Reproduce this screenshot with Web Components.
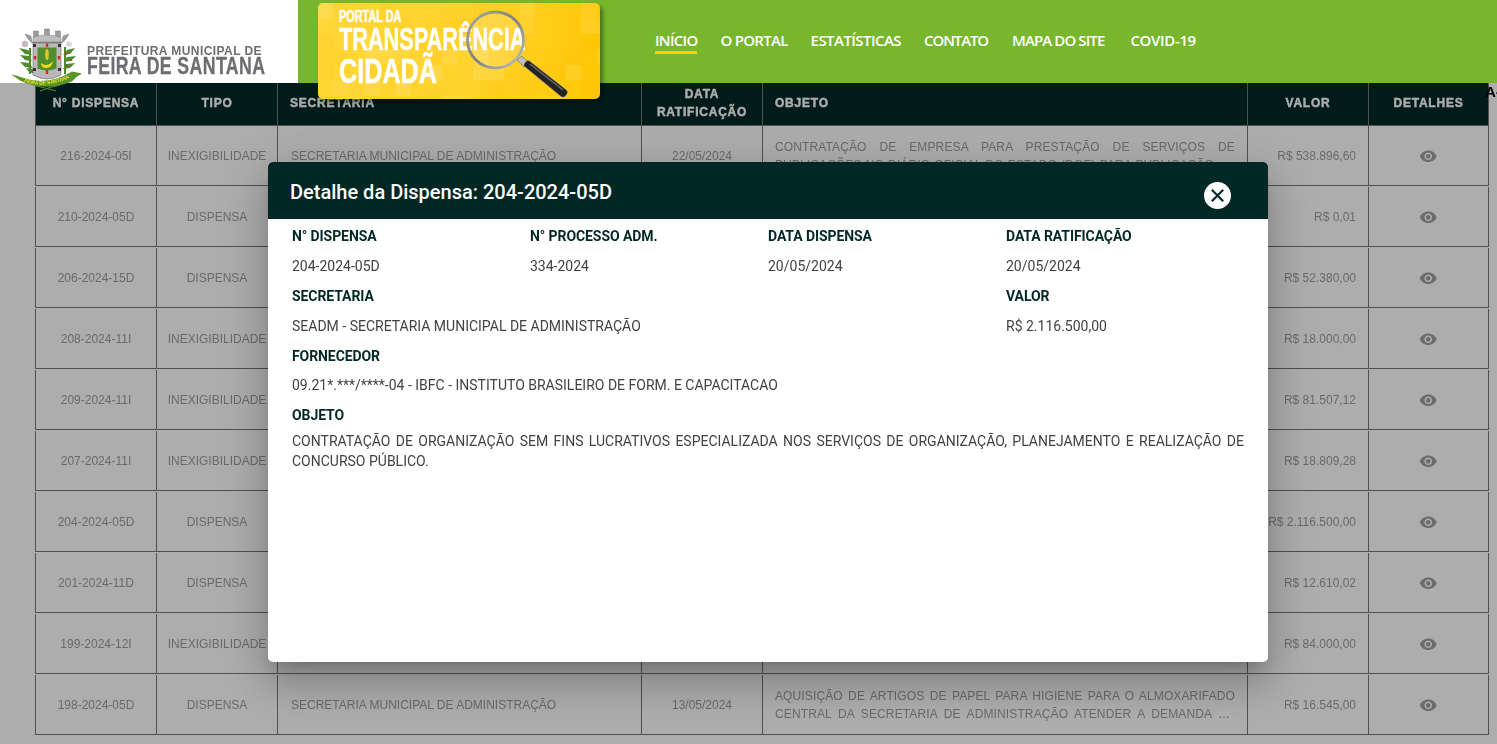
<!DOCTYPE html>
<html lang="pt-BR">
<head>
<meta charset="utf-8">
<title>Portal da Transparência Cidadã</title>
<style>
html,body{margin:0;padding:0;height:744px;overflow:hidden;background:#fff;font-family:"Liberation Sans",Arial,sans-serif}
</style>
</head>
<body>
<site-header></site-header>
<dispensa-table></dispensa-table>
<modal-overlay></modal-overlay>
<dispensa-modal titulo="Detalhe da Dispensa: 204-2024-05D"></dispensa-modal>
<script>
function def(name, css, html){
  customElements.define(name, class extends HTMLElement{
    constructor(){
      super();
      const r=this.attachShadow({mode:'open'});
      r.innerHTML='<style>'+css+'</style>'+(typeof html==='function'?html(this):html);
    }
  });
}

def('brand-logo',`
:host{display:flex;width:298px;height:83px;background:#fff;flex:none;position:relative}
svg{position:absolute;left:0;top:20px;width:90px;height:75px;overflow:visible}
.t{position:absolute;left:87px;color:#6d6e71;font-weight:700;white-space:nowrap}
.a{top:45px;font-size:12px;line-height:13px;letter-spacing:.43px}
.b{top:56px;font-size:23.5px;line-height:20px;letter-spacing:.5px;transform:scaleX(.754);transform-origin:0 0;-webkit-text-stroke:.3px #6d6e71}
`,`
<svg viewBox="0 20 90 75" aria-hidden="true">
  <g fill="#9c9c9c" stroke="#6f6f6f" stroke-width=".4">
    <path d="M25 34l6 2 1 6h30l1-6 6-2-3 5-4 4H32l-4-4z"/>
    <rect x="33.5" y="31" width="5" height="6"/><rect x="44.5" y="29" width="5" height="8"/><rect x="55.5" y="31" width="5" height="6"/>
    <path d="M33 37q14-4 28 0v5H33z" fill="#bdbdbd"/>
  </g>
  <circle cx="25" cy="44" r="3.2" fill="#c9b6c4"/>
  <g fill="#4e8a2c">
    <path d="M19 48l9 2 4 5-7-1z"/><path d="M20 55l9 1 3 5-7-1z"/><path d="M20 62l9 1 4 5-8-1z"/><path d="M26 68l7 1 2 5-6-2z"/>
    <path d="M29 48h2v26h-2z"/>
    <path d="M75 48l-8 2-4 5 7-1z"/><path d="M76 56l-9 1-3 5 7-1z"/><path d="M75 63l-9 1-3 5 7-1z"/>
    <path d="M64 47h2v27h-2z"/>
  </g>
  <circle cx="69" cy="44" r="2.8" fill="#d9d9d9"/>
  <g fill="#c8322b"><circle cx="66" cy="54" r="1.1"/><circle cx="71" cy="60" r="1.1"/><circle cx="67" cy="66" r="1.1"/></g>
  <path d="M33 43h28v32q-14 8-28 0z" fill="#b9b9b9" stroke="#666" stroke-width=".6"/>
  <path d="M37.5 47.5h19v21q-9.500 4-19 0z" fill="#4f8e2a"/>
  <ellipse cx="47" cy="54.500" rx="1.800" ry="5.500" fill="#e3c61b"/>
  <path d="M41 63q6 5 12-2q-1 7-6.500 7t-5.500-5z" fill="#f4dc17"/>
  <g fill="#d8262a"><rect x="45.800" y="43.500" width="2.400" height="3.500"/><rect x="33.800" y="56" width="2.400" height="3.500"/><rect x="57.800" y="56" width="2.400" height="3.500"/><rect x="45.800" y="70" width="2.400" height="4"/></g>
  <g fill="#333"><rect x="33" y="44" width="3" height="3"/><rect x="58" y="44" width="3" height="3"/><rect x="33" y="68" width="3" height="3"/><rect x="58" y="68" width="3" height="3"/></g>
  <path d="M11 74.500q6 1 11 3q25 9 50-6l10 2q-6 3-10 8q-28 11-52-1q-4-3-9-6z" fill="#5a9626"/>
  <path id="rt" d="M22 81.500q25 8 50-5" fill="none"/>
  <text font-family="Liberation Sans" font-weight="700" font-size="4.800" fill="#f1e23a"><textPath href="#rt" startOffset="2">FEIRA DE SANTANA</textPath></text>
  <g fill="none" stroke="#4f8a2c" stroke-width="1.100"><path d="M36 86q10 2 20 5"/><path d="M60 85q-10 2-20 6"/></g>
</svg>
<span class="t a">PREFEITURA MUNICIPAL DE</span>
<span class="t b">FEIRA DE SANTANA</span>
`);

def('portal-banner',`
:host{display:block;position:relative;flex:none;width:282px;height:96px;margin:3px 0 0 20px;border-radius:5px;
  background:linear-gradient(100deg,#ffd737,#ffd22c 55%,#ffc704);box-shadow:3px 3px 4px rgba(0,0,0,.38);color:#fff;z-index:2}
svg{position:absolute;inset:0;width:282px;height:96px;overflow:visible}
#mos{overflow:hidden;border-radius:5px}
.l{position:absolute;left:21px;font-family:"Liberation Sans",sans-serif;font-weight:700;white-space:nowrap;transform-origin:0 0;-webkit-text-stroke:.5px #fff}
.p{top:5px;font-size:16px;line-height:18px;transform:scaleX(.68)}
.q{top:19px;font-size:31px;line-height:36px;transform:scaleX(.70)}
.r{top:48px;font-size:35px;line-height:40px;transform:scaleX(.72)}
`,`
<svg id="mos" viewBox="318 3 282 96" aria-hidden="true"></svg>
<span class="l p">PORTAL DA</span>
<span class="l q">TRANSPARÊNCIA</span>
<span class="l r">CIDADÃ</span>
<svg viewBox="318 3 282 96" aria-hidden="true">
  <defs>
    <linearGradient id="rg" x1="0" y1="0" x2="1" y2="1"><stop offset="0" stop-color="#a9a9a9"/><stop offset=".5" stop-color="#7f7f7f"/><stop offset="1" stop-color="#c4c4c4"/></linearGradient>
  </defs>
  <circle cx="495.500" cy="40" r="28" fill="rgba(255,255,255,.14)" stroke="url(#rg)" stroke-width="2.800"/>
  <path d="M517 60l5-4 7 7-5 4z" fill="#bfbfbf" stroke="#555" stroke-width=".5"/>
  <path d="M526 61.500q1.500-1.500 3.500-.5l37 29q2 2 .5 4l-2 2.500q-2 1.500-4 0l-36.500-30q-1.500-1.500 0-3z" fill="#232323" stroke="#9a9a9a" stroke-width=".5"/>
  <path d="M530 64l33 26" stroke="#6a6a6a" stroke-width="1.400" fill="none"/>
</svg>
`);

def('nav-link',`
:host{display:block;font:600 15px/18px "Open Sans","Liberation Sans",sans-serif;letter-spacing:-.72px;color:#fff;white-space:nowrap;padding-bottom:2px;border-bottom:3px solid transparent}
:host([active]){border-bottom-color:#ffcd00}
`,`<slot></slot>`);

def('site-nav',`
:host{display:flex;gap:23px;align-items:center;margin-left:55px;padding-top:2px}
`,`<slot></slot>`);

def('site-header',`
:host{display:flex;position:relative;z-index:20;height:83px;background:#78b72d;align-items:stretch}
`,`
<brand-logo></brand-logo>
<portal-banner></portal-banner>
<site-nav>
  <nav-link active>INÍCIO</nav-link><nav-link>O PORTAL</nav-link><nav-link style="letter-spacing:-.55px">ESTATÍSTICAS</nav-link><nav-link style="letter-spacing:-1.1px">CONTATO</nav-link><nav-link style="letter-spacing:-.9px;margin-left:1px">MAPA DO SITE</nav-link><nav-link style="letter-spacing:-.35px;margin-left:3px">COVID-19</nav-link>
</site-nav>`);

const COLS='121px 121px 364px 121px 485px 121px 121px';
def('head-row',`
:host{display:grid;grid-template-columns:${COLS};height:43px;background:#002826;color:#fff;font-size:12px;font-weight:700;letter-spacing:.77px;line-height:18px;text-align:center}
div{display:flex;align-items:center;justify-content:center;box-sizing:border-box;border-left:1px solid #767676;border-bottom:1px solid #767676;padding-bottom:2px;-webkit-text-stroke:.4px #fff}
div.l{justify-content:flex-start;padding-left:12px}
div:last-child{border-right:1px solid #767676}
`,`<div>N° DISPENSA</div><div>TIPO</div><div class="l">SECRETARIA</div><div>DATA<br>RATIFICAÇÃO</div><div class="l">OBJETO</div><div>VALOR</div><div>DETALHES</div>`);

def('eye-icon',`:host{display:block;width:18.5px;height:18.5px;margin-top:1px}svg{display:block;width:100%;height:100%;fill:#a0a0a0}`,
`<svg viewBox="0 0 24 24"><path d="M12 4.500C7 4.500 2.730 7.610 1 12c1.730 4.390 6 7.500 11 7.500s9.270-3.110 11-7.500c-1.730-4.390-6-7.500-11-7.500zM12 17c-2.760 0-5-2.240-5-5s2.240-5 5-5 5 2.240 5 5-2.240 5-5 5zm0-8c-1.660 0-3 1.340-3 3s1.340 3 3 3 3-1.340 3-3-1.340-3-3-3z"/></svg>`);

def('data-row',`
:host{display:grid;grid-template-columns:${COLS};height:60px;margin-bottom:1px;color:#9c9c9c;font-size:12px;line-height:18px}
div{display:flex;align-items:center;justify-content:center;box-sizing:border-box;border-left:1px solid #767676;border-bottom:1px solid #767676;white-space:nowrap;min-width:0}
div.l{justify-content:flex-start;padding-left:13px}
div.r{justify-content:flex-end;padding-right:12px}
div:last-child{border-right:1px solid #767676}
div.o{padding:0 12px;white-space:normal}
p{margin:0;width:100%;text-align:justify;display:-webkit-box;-webkit-box-orient:vertical;-webkit-line-clamp:2;overflow:hidden;letter-spacing:.12px}
`,h=>{
  const g=n=>h.getAttribute(n)||'';
  return `<div>${g('num')}</div><div>${g('tipo')}</div><div class="l">${g('sec')}</div><div>${g('data')}</div><div class="o">${g('obj')?'<p>'+g('obj')+'</p>':''}</div><div class="r">${g('val')}</div><div><eye-icon></eye-icon></div>`;
});

def('dispensa-table',`
:host{display:block;position:relative;margin-left:35px;width:1454px;will-change:opacity}
.a{position:absolute;left:1450px;top:1px;font:700 15px/16px "Liberation Sans",sans-serif;color:#000;white-space:nowrap}
`,`
<head-row></head-row>
<data-row num="216-2024-05I" tipo="INEXIGIBILIDADE" sec="SECRETARIA MUNICIPAL DE ADMINISTRAÇÃO" data="22/05/2024" obj="CONTRATAÇÃO DE EMPRESA PARA PRESTAÇÃO DE SERVIÇOS DE PUBLICAÇÕES NO DIÁRIO OFICIAL DO ESTADO (DOE) PARA PUBLICAÇÃO DE ATOS OFICIAIS DA ADMINISTRAÇÃO" val="R$ 538.896,60"></data-row>
<data-row num="210-2024-05D" tipo="DISPENSA" val="R$ 0,01"></data-row>
<data-row num="206-2024-15D" tipo="DISPENSA" val="R$ 52.380,00"></data-row>
<data-row num="208-2024-11I" tipo="INEXIGIBILIDADE" val="R$ 18.000,00"></data-row>
<data-row num="209-2024-11I" tipo="INEXIGIBILIDADE" val="R$ 81.507,12"></data-row>
<data-row num="207-2024-11I" tipo="INEXIGIBILIDADE" val="R$ 18.809,28"></data-row>
<data-row num="204-2024-05D" tipo="DISPENSA" val="R$ 2.116.500,00"></data-row>
<data-row num="201-2024-11D" tipo="DISPENSA" val="R$ 12.610,02"></data-row>
<data-row num="199-2024-12I" tipo="INEXIGIBILIDADE" val="R$ 84.000,00"></data-row>
<data-row num="198-2024-05D" tipo="DISPENSA" sec="SECRETARIA MUNICIPAL DE ADMINISTRAÇÃO" data="13/05/2024" obj="AQUISIÇÃO DE ARTIGOS DE PAPEL PARA HIGIENE PARA O ALMOXARIFADO CENTRAL DA SECRETARIA DE ADMINISTRAÇÃO ATENDER A DEMANDA DA SECRETARIA MUNICIPAL DE ADMINISTRAÇÃO" val="R$ 16.545,00"></data-row>
<span class="a">A-</span>
`);

def('modal-overlay',`:host{display:block;position:fixed;inset:0;z-index:10;background:rgba(0,0,0,.32)}`,``);

def('detail-field',`
:host{display:block;grid-column:span var(--span,1);min-width:0}
b{display:block;font:700 14px/20px Roboto,sans-serif;letter-spacing:-.08px;color:#022826}
span{display:block;margin-top:var(--gap,10px);font:400 14px/20px Roboto,sans-serif;color:#424242}
`,h=>`<b>${h.getAttribute('label')}</b><span><slot></slot></span>`);

def('dispensa-modal',`
:host{display:flex;flex-direction:column;position:fixed;left:268px;top:162px;width:1000px;height:500px;z-index:30;background:#fff;border-radius:5px;
 box-shadow:0 11px 15px -7px rgba(0,0,0,.2),0 24px 38px 3px rgba(0,0,0,.14),0 9px 46px 8px rgba(0,0,0,.12)}
header{display:flex;align-items:center;justify-content:space-between;height:57px;box-sizing:border-box;padding:0 37px 0 22px;background:#022826;border-radius:5px 5px 0 0;color:#fff}
h2{margin:0;font:500 20px/24px Roboto,sans-serif;padding-top:3px}
button{all:unset;display:flex;align-items:center;justify-content:center;width:27px;height:27px;border-radius:50%;background:#fff;align-self:flex-start;margin-top:20px}
button svg{width:21px;height:21px;fill:#022826;stroke:#022826;stroke-width:.8}
.g{display:grid;grid-template-columns:repeat(4,238px);row-gap:10px;padding:7px 24px 0}
p{margin:6px 0 0;font:400 14px/20px Roboto,sans-serif;color:#424242;text-align:justify}
.o{grid-column:1/-1}
.o b{display:block;font:700 14px/20px Roboto,sans-serif;letter-spacing:-.08px;color:#022826}
`,h=>`
<header><h2>${h.getAttribute('titulo')}</h2><button aria-label="Fechar"><svg viewBox="0 0 24 24"><path d="M19 6.410 17.590 5 12 10.590 6.410 5 5 6.410 10.590 12 5 17.590 6.410 19 12 13.410 17.590 19 19 17.590 13.410 12z"/></svg></button></header>
<div class="g">
  <detail-field label="N° DISPENSA">204-2024-05D</detail-field>
  <detail-field label="N° PROCESSO ADM.">334-2024</detail-field>
  <detail-field label="DATA DISPENSA">20/05/2024</detail-field>
  <detail-field label="DATA RATIFICAÇÃO">20/05/2024</detail-field>
  <detail-field label="SECRETARIA" style="--span:3">SEADM - SECRETARIA MUNICIPAL DE ADMINISTRAÇÃO</detail-field>
  <detail-field label="VALOR">R$ 2.116.500,00</detail-field>
  <detail-field label="FORNECEDOR" style="--span:4;--gap:9px">09.21*.***/****-04 - IBFC - INSTITUTO BRASILEIRO DE FORM. E CAPACITACAO</detail-field>
  <div class="o"><b>OBJETO</b><p>CONTRATAÇÃO DE ORGANIZAÇÃO SEM FINS LUCRATIVOS ESPECIALIZADA NOS SERVIÇOS DE ORGANIZAÇÃO, PLANEJAMENTO E REALIZAÇÃO DE CONCURSO PÚBLICO.</p></div>
</div>`);

(function(){
  const m=document.querySelector('site-header').shadowRoot.querySelector('portal-banner').shadowRoot.getElementById('mos');
  let s='',seed=7;
  const rnd=()=>(seed=(seed*16807)%2147483647)/2147483647;
  for(let y=3;y<99;y+=15.5){for(let x=318;x<600;x+=15.5){
    const v=rnd();
    if(v<.4){s+=`<rect x="${x}" y="${y}" width="15.500" height="15.500" fill="${v<.2?'#fff':'#ffb800'}" opacity="${.05+rnd()*.07}"/>`;}
  }}
  m.innerHTML=s;
})();
</script>
</body>
</html>
